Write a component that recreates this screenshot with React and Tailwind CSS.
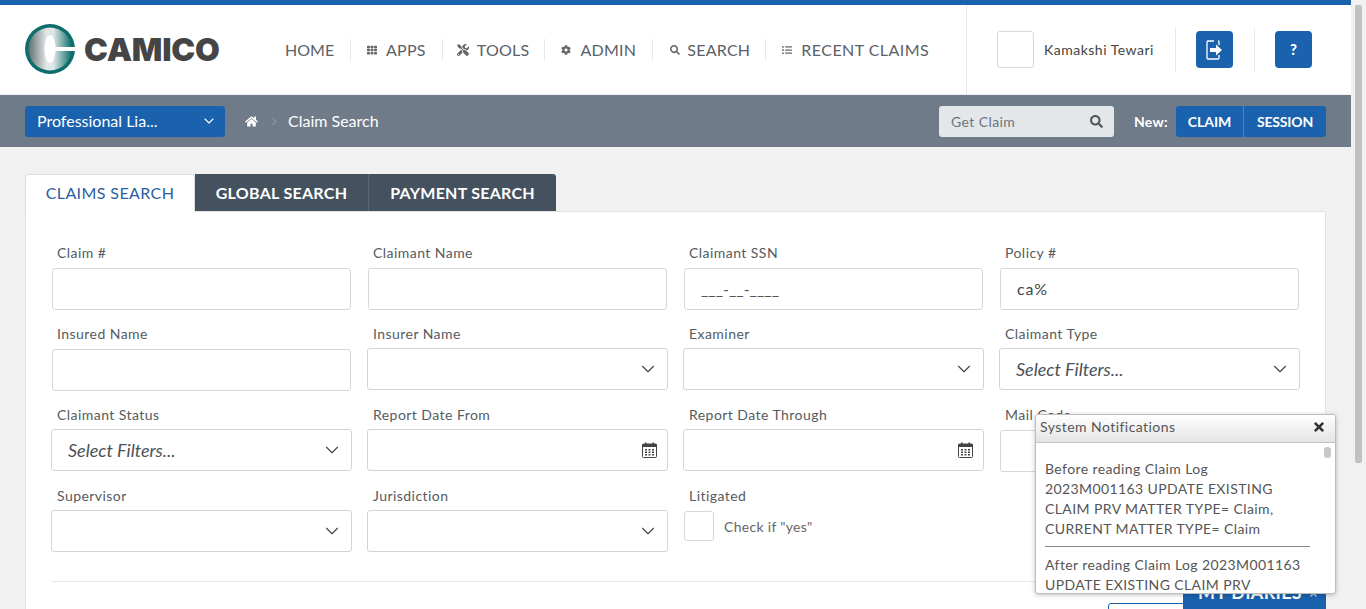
import React from "react";
import { FaHome, FaTh, FaTools, FaCog, FaSearch, FaListUl, FaChevronRight, FaTimes, FaAngleDoubleUp } from "react-icons/fa";
import { LuChevronDown } from "react-icons/lu";

const Logo = () => (
  <svg width="52" height="52" viewBox="0 0 52 52" className="mb-[2px] shrink-0">
    <defs>
      <linearGradient id="lg1" x1="0" x2="1"><stop offset="0" stopColor="#5f6f70" /><stop offset="0.42" stopColor="#e3e8e7" /><stop offset="0.58" stopColor="#dfe6e5" /><stop offset="1" stopColor="#0f6f6c" /></linearGradient>
    </defs>
    <circle cx="26" cy="26" r="25" fill="#0d6e6b" />
    <circle cx="26" cy="26" r="21.5" fill="url(#lg1)" />
    <ellipse cx="26" cy="26" rx="5.5" ry="14" fill="#fff" />
    <rect x="26" y="24" width="26" height="4" fill="#fff" />
  </svg>
);

const Cal = () => (
  <svg width="15" height="16" viewBox="0 0 15 16" className="text-[#444]">
    <rect x="0.5" y="2" width="14" height="13.5" rx="1" fill="#fff" stroke="currentColor" />
    <rect x="0.5" y="2" width="14" height="3" fill="currentColor" />
    <rect x="3" y="0.5" width="1.5" height="3" fill="currentColor" />
    <rect x="10.5" y="0.5" width="1.5" height="3" fill="currentColor" />
    <path d="M3 7h2v1.5H3zM6.5 7h2v1.5h-2zM10 7h2v1.5h-2zM3 9.5h2V11H3zM6.5 9.5h2V11h-2zM10 9.5h2V11h-2zM3 12h2v1.5H3zM6.5 12h2v1.5h-2zM10 12h2v1.5h-2z" fill="currentColor" />
  </svg>
);

const Chev = () => <LuChevronDown strokeWidth={1.2} className="text-[#444] text-[22px]" />;

const NavItem = ({ icon, label, cls }) => (
  <div className={`flex items-center h-[22px] ${cls}`}>
    {icon}
    <span>{label}</span>
  </div>
);

const Label = ({ children }) => <div className="h-[18px] mb-[6px] pl-[6px] text-[14px] leading-[18px] tracking-[0.45px] text-[#555b60]">{children}</div>;

const Text = ({ label, value, placeholder }) => (
  <div>
    <Label>{label}</Label>
    <div className="mx-px h-[42px] bg-white border border-[#d5d8da] rounded-[3px] flex items-center pl-[16px] text-[16px] text-[#444]">
      {value && <span className="tracking-[0.8px]">{value}</span>}
      {placeholder && <span className="text-[#555]">{placeholder}</span>}
    </div>
  </div>
);

const Select = ({ label, value }) => (
  <div>
    <Label>{label}</Label>
    <div className="-mt-px mb-px h-[42px] bg-white border border-[#d0d5d8] rounded-[3px] flex items-center justify-between pl-[16px] pr-[8px] text-[18px] italic text-[#4a5157]">
      <span>{value}</span>
      <Chev />
    </div>
  </div>
);

const DateF = ({ label }) => (
  <div>
    <Label>{label}</Label>
    <div className="-mt-px mb-px h-[42px] bg-white border border-[#d0d5d8] rounded-[3px] flex items-center justify-end pr-[10px]"><Cal /></div>
  </div>
);

export default function App() {
  return (
    <div className="relative flex h-[609px] w-[1366px] overflow-hidden bg-[#f1f1f1] text-[#444]" style={{ fontFamily: "Lato, 'Open Sans', sans-serif" }}>
      <div className="w-[1351px] shrink-0 flex flex-col">
        <div className="h-[5px] shrink-0 bg-[#1a62ae]" />
        <header className="h-[90px] shrink-0 bg-white flex items-stretch border-b border-[#f0f0f0]">
          <div className="flex items-center pl-[24px] w-[285px] shrink-0">
            <Logo />
            <span className="ml-[8px] text-[32px] leading-none font-black text-[#454545] tracking-[-0.2px]" style={{ fontFamily: "Inter, sans-serif" }}>CAMICO</span>
          </div>
          <nav className="flex items-center w-[681px] shrink-0 text-[16px] text-[#5a6168] tracking-[0.25px]">
            <NavItem cls="w-[65px] tracking-normal" label="HOME" />
            <NavItem cls="pl-[16px] pr-[16px] gap-[9px] border-l border-[#e8e8e8]" icon={<FaTh className="text-[10px] text-[#666]" />} label="APPS" />
            <NavItem cls="pl-[14px] pr-[15px] gap-[8px] border-l border-[#e8e8e8]" icon={<FaTools className="text-[12px] text-[#666]" />} label="TOOLS" />
            <NavItem cls="pl-[16px] pr-[16px] gap-[9px] border-l border-[#e8e8e8]" icon={<FaCog className="text-[10px] text-[#666]" />} label="ADMIN" />
            <NavItem cls="pl-[17px] pr-[15px] gap-[7px] border-l border-[#e8e8e8]" icon={<FaSearch className="text-[10px] text-[#666]" />} label="SEARCH" />
            <NavItem cls="pl-[16px] gap-[9px] border-l border-[#e8e8e8] tracking-[0.45px]" icon={<FaListUl className="text-[10px] text-[#666]" />} label="RECENT CLAIMS" />
          </nav>
          <div className="border-l border-[#e8e8e8] flex items-center pl-[30px]">
            <div className="w-[37px] h-[37px] border border-[#d8d8d8] rounded-[3px]" />
            <span className="ml-[10px] text-[14px] tracking-[0.5px] text-[#444] w-[131px]">Kamakshi Tewari</span>
            <div className="h-[44px] border-l border-[#e8e8e8] pl-[20px] flex items-center">
              <button className="w-[37px] h-[37px] bg-[#1a62ae] rounded-[4px] flex items-center justify-center">
                <svg width="17" height="20" viewBox="0 0 17 20">
                  <path d="M8 1H2a1 1 0 0 0-1 1v16a1 1 0 0 0 1 1h10a1 1 0 0 0 1-1v-3M13 5V2a1 1 0 0 0-1-1" fill="none" stroke="#fff" strokeWidth="1.3" />
                  <path d="M4 8h6V4.5l6 5.5-6 5.5V12H4z" fill="#fff" />
                </svg>
              </button>
            </div>
            <div className="h-[44px] ml-[21px] border-l border-[#e8e8e8] pl-[20px] flex items-center">
              <button className="w-[37px] h-[37px] bg-[#1a62ae] rounded-[4px] flex items-center justify-center text-white font-black text-[15px]">?</button>
            </div>
          </div>
        </header>
        <div className="h-[52px] shrink-0 bg-[#6f7b88] flex items-center px-[25px]">
          <div className="w-[200px] h-[31px] bg-[#1a62ae] rounded-[3px] flex items-center justify-between pl-[12px] pr-[8px] text-white text-[16px]">
            <span>Professional Lia...</span>
            <LuChevronDown strokeWidth={1.6} className="text-[16px]" />
          </div>
          <FaHome className="ml-[20px] text-white text-[13px]" />
          <FaChevronRight className="ml-[12px] text-[#8a95a0] text-[9px]" />
          <span className="ml-[9px] text-white text-[16px]">Claim Search</span>
          <div className="ml-auto w-[175px] h-[31px] bg-[#e3e7ea] rounded-[3px] flex items-center justify-between pl-[12px] pr-[11px] text-[14px] tracking-[0.4px] text-[#6d7378]">
            <span>Get Claim</span>
            <FaSearch className="text-[13px] text-[#555]" />
          </div>
          <span className="ml-[20px] text-white font-bold text-[14px] tracking-[0.3px]">New:</span>
          <div className="ml-[8px] h-[31px] w-[150px] bg-[#1a62ae] rounded-[3px] flex items-center text-white font-bold text-[14px]">
            <span className="w-[68px] text-center border-r border-[#4a84c2] leading-[31px]">CLAIM</span>
            <span className="flex-1 text-center tracking-[-0.2px]">SESSION</span>
          </div>
        </div>
        <main className="px-[25px] pt-[27px]">
          <div className="relative z-10 flex h-[38px] text-[16px]">
            <div className="w-[170px] h-[38px] pb-[2px] bg-white border border-b-0 border-[#dedede] rounded-t-[3px] flex items-center justify-center text-[#2b5f9e] tracking-[0.4px]">CLAIMS SEARCH</div>
            <div className="w-[174px] bg-[#44525f] text-white font-bold flex items-center justify-center border-r border-[#5a6774] h-[37px] tracking-[0.3px]">GLOBAL SEARCH</div>
            <div className="w-[187px] bg-[#44525f] text-white font-bold flex items-center justify-center rounded-tr-[3px] h-[37px] tracking-[0.25px]">PAYMENT SEARCH</div>
          </div>
          <div className="-mt-px bg-white border border-[#e2e2e2] rounded-b-[3px] pt-[32px] px-[25px] h-[500px]">
            <div className="grid grid-cols-4 gap-x-[15px] gap-y-[15px]">
              <Text label="Claim #" />
              <Text label="Claimant Name" />
              <Text label="Claimant SSN" placeholder="___-__-____" />
              <Text label="Policy #" value="ca%" />
              <Text label="Insured Name" />
              <Select label="Insurer Name" />
              <Select label="Examiner" />
              <Select label="Claimant Type" value="Select Filters..." />
              <Select label="Claimant Status" value="Select Filters..." />
              <DateF label="Report Date From" />
              <DateF label="Report Date Through" />
              <Text label="Mail Code" />
              <Select label="Supervisor" />
              <Select label="Jurisdiction" />
              <div>
                <Label>Litigated</Label>
                <div className="flex items-center h-[30px] pl-px">
                  <div className="w-[30px] h-[30px] border border-[#d5d8da] rounded-[3px] bg-white" />
                  <span className="ml-[10px] pt-[1px] text-[14px] tracking-[0.3px] text-[#666]">Check if "yes"</span>
                </div>
              </div>
            </div>
            <div className="mt-[28px] border-t border-[#e8e8e8]" />
            <div className="mt-[21px] flex justify-end">
              <div className="w-[192px] h-[36px] border border-[#1a62ae] rounded-[3px] bg-white" />
            </div>
          </div>
        </main>
      </div>
      <div className="w-[15px] bg-[#f1f1f1] pt-[5px] px-[4px]">
        <div className="h-[458px] bg-[#c1c1c1] rounded-[2px]" />
      </div>

      <div className="absolute left-[1183px] top-[576px] w-[143px] h-[33px] bg-[#1a62ae] text-white font-bold text-[18px] flex items-center pl-[15px] tracking-[0.3px]">
        <span>MY DIARIES</span>
        <FaAngleDoubleUp className="ml-[6px] text-[11px] opacity-60" />
      </div>

      <div className="absolute left-[1035px] top-[414px] w-[301px] h-[180px] bg-white border border-[#bdbdbd] rounded-[3px] shadow-[0_1px_4px_rgba(0,0,0,0.25)] overflow-hidden">
        <div className="h-[28px] pb-[4px] bg-gradient-to-b from-white to-[#e4e4e4] border-b border-[#c4c4c4] flex items-center justify-between pl-[4px] pr-[9px] text-[14px] tracking-[0.45px] text-[#555]">
          <span>System Notifications</span>
          <FaTimes className="text-[14px] text-[#333]" />
        </div>
        <div className="relative pl-[9px] pr-[25px] pt-[16px] text-[14px] leading-[20px] tracking-[0.4px] text-[#555]">
          <div>Before reading Claim Log 2023M001163 UPDATE EXISTING CLAIM PRV MATTER TYPE= Claim, CURRENT MATTER TYPE= Claim</div>
          <div className="mt-[7px] border-t border-[#8a8a8a] pt-[8px]">After reading Claim Log 2023M001163 UPDATE EXISTING CLAIM PRV MATTER TYPE= Claim</div>
          <div className="absolute right-[4px] top-[4px] w-[7px] h-[11px] rounded-[3px] bg-[#c8c8c8]" />
        </div>
      </div>
    </div>
  );
}
